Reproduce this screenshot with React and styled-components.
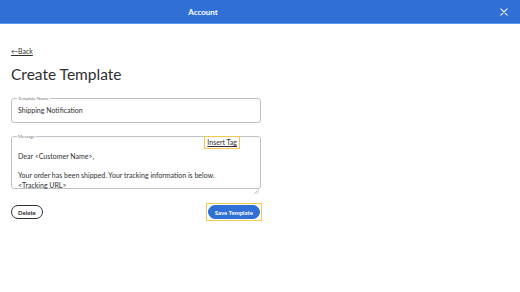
import React from "react";
import styled, { createGlobalStyle } from "styled-components";

const Global = createGlobalStyle`
  body {
    margin: 0;
    background: #ffffff;
    font-family: Lato, "Noto Sans", sans-serif;
    color: #2e2f32;
  }
`;

const Header = styled.header`
  height: 23px;
  background-color: #2f6fd6;
  border-bottom: 1px solid #5f9bea;
  display: grid;
  grid-template-columns: 406px 1fr;
  align-items: center;
`;

const HeaderTitle = styled.h1`
  margin: 0;
  text-align: center;
  color: #ffffff;
  font-size: 8px;
  font-weight: 700;
`;

const CloseButton = styled.button`
  justify-self: end;
  margin-right: 12px;
  border: none;
  background: none;
  padding: 0;
  display: flex;
  color: #ffffff;
  cursor: pointer;
`;

const Main = styled.main`
  width: 250px;
  padding: 22px 0 0 11px;
  display: flex;
  flex-direction: column;
`;

const BackLink = styled.a`
  font-size: 7px;
  color: #2e2f32;
  text-decoration: underline;
  align-self: flex-start;
  line-height: 10px;
`;

const Title = styled.h2`
  margin: 8px 0 12px;
  font-size: 15.5px;
  font-weight: 400;
  line-height: 20px;
  color: #2e2f32;
`;

const Field = styled.fieldset`
  margin: ${(p) => p.$top || "0"} 0 0;
  padding: 0 6px 5px;
  border: 1px solid #bfc1c5;
  border-radius: 3px;
  min-width: 0;
  position: relative;
  height: ${(p) => p.$height};
  box-sizing: border-box;
`;

const Legend = styled.legend`
  font-size: 4.5px;
  color: #74767c;
  padding: 0 1px;
  margin-left: -1px;
  line-height: 5px;
`;

const Value = styled.div`
  font-size: 7px;
  line-height: 10px;
  padding-top: 4px;
`;

const MessageText = styled.div`
  font-size: 7px;
  line-height: 9.5px;
  padding-top: 13px;
  white-space: pre-line;
`;

const InsertTag = styled.button`
  position: absolute;
  top: -3px;
  right: 20px;
  font-family: inherit;
  font-size: 7px;
  color: #2e2f32;
  text-decoration: underline;
  background: #ffffff;
  border: 1.5px solid #f2c94c;
  padding: 1px 2px;
  line-height: 9px;
`;

const Resize = styled.svg`
  position: absolute;
  right: 1px;
  bottom: 1px;
`;

const Actions = styled.div`
  margin-top: 14px;
  display: flex;
  justify-content: space-between;
  align-items: center;
`;

const Pill = styled.button`
  font-family: inherit;
  font-size: 6px;
  font-weight: 700;
  border-radius: 999px;
  cursor: pointer;
  height: 14px;
  padding: 0 6px;
  color: ${(p) => (p.$primary ? "#ffffff" : "#2e2f32")};
  background: ${(p) => (p.$primary ? "#2f6fd6" : "#ffffff")};
  border: 1px solid ${(p) => (p.$primary ? "#2f6fd6" : "#2e2f32")};
`;

const Focus = styled.div`
  border: 1.5px solid #f2c94c;
  padding: 1px;
  display: flex;
  margin-right: -1px;
`;

export default function App() {
  return (
    <>
      <Global />
      <Header>
        <HeaderTitle>Account</HeaderTitle>
        <CloseButton aria-label="Close">
          <svg width="8" height="8" viewBox="0 0 10 10">
            <path d="M1 1 L9 9 M9 1 L1 9" stroke="#ffffff" strokeWidth="1.3" strokeLinecap="round" />
          </svg>
        </CloseButton>
      </Header>
      <Main>
        <BackLink href="#">←Back</BackLink>
        <Title>Create Template</Title>
        <Field $height="27px">
          <Legend>Template Name</Legend>
          <Value>Shipping Notification</Value>
        </Field>
        <Field $height="55px" $top="11px">
          <Legend>Message</Legend>
          <InsertTag>Insert Tag</InsertTag>
          <MessageText>
            {"Dear <Customer Name>,\n\nYour order has been shipped. Your tracking information is below.\n<Tracking URL>"}
          </MessageText>
          <Resize width="5" height="5" viewBox="0 0 5 5">
            <path d="M4.5 0.5 L0.5 4.5 M4.5 2.5 L2.5 4.5" stroke="#8a8c90" strokeWidth="0.6" />
          </Resize>
        </Field>
        <Actions>
          <Pill>Delete</Pill>
          <Focus>
            <Pill $primary>Save Template</Pill>
          </Focus>
        </Actions>
      </Main>
    </>
  );
}
